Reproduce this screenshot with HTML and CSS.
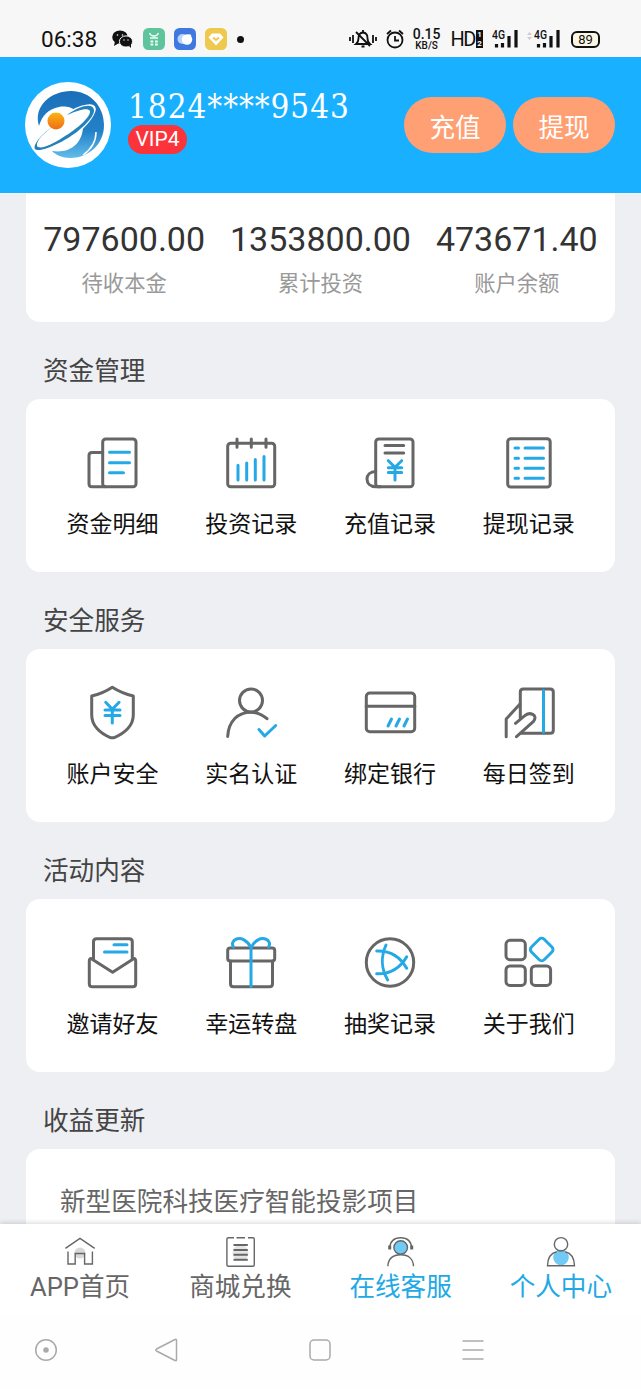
FILE: index.html
```
<!DOCTYPE html>
<html lang="zh-CN">
<head>
    <meta charset="UTF-8">
    <meta name="viewport" content="width=device-width, initial-scale=1.0">
    <title>个人中心</title>
    <link rel="stylesheet" href="styles.css">
</head>
<body>
    <div class="status-bar">
        <div class="status-left">
            <span class="time">06:38</span>
            <svg class="wechat" width="21" height="18" viewBox="0 0 21 18">
                <ellipse cx="8" cy="7" rx="7.8" ry="6.6" fill="#111"/>
                <path d="M3 11l-1 5 5-3z" fill="#111"/>
                <ellipse cx="14" cy="11.5" rx="6.6" ry="5.6" fill="#111" stroke="#f7f7f7"/>
                <path d="M17 16l2 2v-4z" fill="#111"/>
                <g fill="#f7f7f7"><circle cx="5.5" cy="5" r=".8"/><circle cx="10.5" cy="5" r=".8"/><circle cx="12" cy="10" r=".7"/><circle cx="16" cy="10" r=".7"/></g>
            </svg>
            <svg width="22" height="22" viewBox="0 0 22 22">
                <rect width="22" height="22" rx="5.5" fill="#5fc49c"/>
                <path d="M6.500 5q1 3 4.500 3t4.500-3M7 10h8M11 8v2" fill="none" stroke="#e9fff5" stroke-width="1.300"/>
                <path d="M7.500 12.500h2.800v2H7.500zM12 12.500h2.800v2H12zM7.500 15.500h2.800v2H7.500zM12 15.500h2.800v2H12z" fill="#e9fff5"/>
            </svg>
            <svg width="22" height="22" viewBox="0 0 22 22">
                <rect width="22" height="22" rx="5.500" fill="#3f79e0"/>
                <circle cx="8.500" cy="11" r="5" fill="#bdd3ff"/>
                <circle cx="13" cy="11.500" r="5.200" fill="#fff"/>
                <circle cx="15.500" cy="8" r="1.800" fill="#fff"/>
            </svg>
            <svg width="22" height="22" viewBox="0 0 22 22">
                <rect width="22" height="22" rx="5.500" fill="#eec94d"/>
                <path d="M7 5.500h8l3.500 4L11 17.500 3.500 9.500z" fill="#fff"/>
                <path d="M8 9.500l3 2.500 3-2.500" fill="none" stroke="#eec94d" stroke-width="2"/>
            </svg>
            <span class="dot"></span>
        </div>
        <div class="status-right">
            <svg width="28" height="22" viewBox="0 0 28 22" fill="none" stroke="#111" stroke-width="1.800">
                <path d="M1 9v4M4 7v8M24 7v8M27 9v4M7 16q2.500-2 2.500-6 0-5 4.500-5.500 4.500.5 4.500 5.500 0 4 2.500 6zM12.500 18.500h3M14 2v2M7 4l14 14"/>
            </svg>
            <svg class="alarm" width="18" height="20" viewBox="0 0 18 20" fill="none" stroke="#111" stroke-width="1.800">
                <circle cx="9" cy="11" r="7.500"/>
                <path d="M9 7v4.500h4M1 5l4-3.500M17 5l-4-3.500"/>
            </svg>
            <span class="speed"><b>0.15</b><small>KB/S</small></span>
            <span class="hd">HD</span>
            <span class="sim"><i>1</i><i>2</i></span>
            <svg class="signal" width="28" height="22" viewBox="0 0 28 22">
                <text x="0" y="11" textLength="13" lengthAdjust="spacingAndGlyphs">4G</text>
                <path d="M4.500 16v3.500M10.500 15v4.500M17 8v11.500M24 2v17.500" stroke="#111" stroke-width="3.200"/>
            </svg>
            <svg class="signal second" width="35" height="22" viewBox="0 0 35 22">
                <path d="M0 7l2.500-3L5 7zM0 9l2.500 3L5 9z" fill="#ccc"/>
                <text x="7" y="11" textLength="13" lengthAdjust="spacingAndGlyphs">4G</text>
                <path d="M11.500 16v3.500M17.500 15v4.500M24 8v11.500M31 2v17.500" stroke="#111" stroke-width="3.200"/>
            </svg>
            <span class="battery">89</span>
        </div>
    </div>

    <header class="header">
        <svg class="avatar" width="86" height="86" viewBox="0 0 86 86">
            <defs>
                <linearGradient id="planet" x1="0" y1="0" x2="0" y2="1">
                    <stop offset="0" stop-color="#1b6fb8"/>
                    <stop offset=".6" stop-color="#2381c8"/>
                    <stop offset="1" stop-color="#62bdea"/>
                </linearGradient>
                <linearGradient id="sun" x1="0" y1="0" x2="0" y2="1">
                    <stop offset="0" stop-color="#fbb512"/>
                    <stop offset="1" stop-color="#ee6d17"/>
                </linearGradient>
            </defs>
            <circle cx="43" cy="43" r="43" fill="#fff"/>
            <path d="M14 44C8 24 26 9 46 9c19 0 33 15 33 34 0 20-16 33-34 33-8 0-14-3-18-7 18 3 31-8 31-25C57 28 44 23 34 25c-11 2-17 9-20 19z" fill="url(#planet)"/>
            <ellipse cx="40" cy="46" rx="37" ry="12" transform="rotate(-36 40 46)" fill="#fff"/>
            <circle cx="37" cy="46" r="20" fill="#fff"/>
            <path d="M42 33C56 23 68 21 69 28c1 8-18 25-35 33-16 8-27 10-24 2 3-7 11-14 20-20C20 50 11 58 12 64c3 4 14-1 25-8 17-10 29-22 28-27-2-4-12-1-23 4z" fill="#2482ba"/>
            <path d="M71 50q0 14-13 23" fill="none" stroke="#fff" stroke-width="1.500"/>
            <circle cx="31" cy="39" r="8.500" fill="url(#sun)"/>
        </svg>
        <div class="user">
            <div class="phone">1824****9543</div>
            <span class="vip">VIP4</span>
        </div>
        <div class="actions">
            <button type="button">充值</button>
            <button type="button">提现</button>
        </div>
    </header>

    <main class="content">
        <div class="card stats">
            <div class="stat"><strong>797600.00</strong><span>待收本金</span></div>
            <div class="stat"><strong>1353800.00</strong><span>累计投资</span></div>
            <div class="stat"><strong>473671.40</strong><span>账户余额</span></div>
        </div>

        <h2>资金管理</h2>
        <div class="card menu">
            <a class="menu-item">
                <svg class="icon" viewBox="0 0 56 56">
                    <rect x="18.700" y="4" width="33.300" height="47.700" rx="3"/>
                    <path d="M18.700 17.500H8q-3 0-3 3v28.200q0 3 3 3h13"/>
                    <path class="blue" d="M25.500 17.300h20M25.500 27.700h20M25.500 37.800h14"/>
                </svg>
                <span>资金明细</span>
            </a>
            <a class="menu-item">
                <svg class="icon" viewBox="0 0 56 56">
                    <rect x="4.700" y="8.300" width="47" height="43.400" rx="3"/>
                    <path d="M14 4v8.300M28.300 4v8.300M43 4v8.300"/>
                    <path class="blue" d="M15 30.300V45M23.700 28V45M32.300 24.500V45M41 21.500V45"/>
                </svg>
                <span>投资记录</span>
            </a>
            <a class="menu-item">
                <svg class="icon" viewBox="0 0 56 56">
                    <rect x="13.700" y="4" width="37.300" height="47.700" rx="3"/>
                    <path d="M13.700 36.500C8 36.500 5 40 5 44s3 7.700 9 7.700h4M23 10.500h18.700M23 18h18.700"/>
                    <path class="blue" d="M26.300 25.700l6.700 6.600 6.700-6.600M33 32.300V45M26.300 32.700h13.400M26.300 37.500h13.400"/>
                </svg>
                <span>充值记录</span>
            </a>
            <a class="menu-item">
                <svg class="icon" viewBox="0 0 56 56">
                    <rect x="6.700" y="3.700" width="42.500" height="48.300" rx="3"/>
                    <path class="blue" d="M14 13h3.500M24 13h18.500M14 23.300h3.500M24 23.300h18.500M14 33.300h3.500M24 33.300h18.500M14 43.300h3.500M24 43.300h18.500"/>
                </svg>
                <span>提现记录</span>
            </a>
        </div>

        <h2>安全服务</h2>
        <div class="card menu">
            <a class="menu-item">
                <svg class="icon" viewBox="0 0 56 56">
                    <path d="M28.300 2.300Q38 8.500 49.300 11v19c0 11-9 18.500-18.500 22.300q-2.500 1-5 0C16.500 48.500 7.700 41 7.700 30V11Q19 8.500 28.300 2.300z"/>
                    <path class="blue" d="M21.700 17.300l6.600 7 6.800-7M28.300 24.300V38M21 25h15M21 30.500h15"/>
                </svg>
                <span>账户安全</span>
            </a>
            <a class="menu-item">
                <svg class="icon" viewBox="0 0 56 56">
                    <circle cx="28" cy="15.500" r="11.500"/>
                    <path d="M4.700 51.500C5.500 36 15 27.200 28 27.200q9 0 16 6.500"/>
                    <path class="blue" d="M36 44.500l5.700 6.500 11-10.500"/>
                </svg>
                <span>实名认证</span>
            </a>
            <a class="menu-item">
                <svg class="icon" viewBox="0 0 56 56">
                    <rect x="4.300" y="8" width="48.400" height="38.700" rx="3.500"/>
                    <path d="M4.300 21.300h48.400"/>
                    <path class="blue" d="M26 41l3.500-7M34 41l3.500-7M42 41l3.500-7"/>
                </svg>
                <span>绑定银行</span>
            </a>
            <a class="menu-item">
                <svg class="icon" viewBox="0 0 56 56">
                    <path d="M19.300 33V7q0-3 3-3h27q3 0 3 3v38.300q0 3-3 3H20"/>
                    <path class="blue" d="M42.500 5.500v41.500"/>
                    <path d="M5.200 51.700V34L19 19M14.500 38.300l9-7.500c5-4.500 14-1 9 5.500L15.500 51.700"/>
                </svg>
                <span>每日签到</span>
            </a>
        </div>

        <h2>活动内容</h2>
        <div class="card menu">
            <a class="menu-item">
                <svg class="icon" viewBox="0 0 56 56">
                    <path d="M9.500 24V6.700q0-3 3-3h32.800q3 0 3 3V24"/>
                    <path d="M7 23.500l21.600 13.800L50 23.500q1.700 0 1.700 3v22.200q0 3-3 3H8.300q-3 0-3-3V26.500q0-3 1.700-3z"/>
                    <path class="blue" d="M30 9.700h13M20.500 17h22.500"/>
                </svg>
                <span>邀请好友</span>
            </a>
            <a class="menu-item">
                <svg class="icon" viewBox="0 0 56 56">
                    <rect x="4.700" y="13" width="47" height="13" rx="2.500"/>
                    <path d="M7.500 26v22.700q0 3 3 3h36q3 0 3-3V26"/>
                    <path class="blue" d="M28 51.500V12.500C24 5 18 2.500 13.500 4 9.500 5.500 8.500 9 10.500 12M28 12.500C32 5 38 2.500 42.500 4c4 1.500 5 5 3 8"/>
                </svg>
                <span>幸运转盘</span>
            </a>
            <a class="menu-item">
                <svg class="icon" viewBox="0 0 56 56">
                    <circle cx="28" cy="27.500" r="23.700"/>
                    <path class="blue" d="M14.700 16c12-.5 23 5 30 17.300M14.700 38.700c12 .5 23-5 30-17M24 10c-5 11-5 24 1.700 35"/>
                </svg>
                <span>抽奖记录</span>
            </a>
            <a class="menu-item">
                <svg class="icon" viewBox="0 0 56 56">
                    <rect x="5" y="5.300" width="19.300" height="19.400" rx="4"/>
                    <rect x="5" y="31" width="19.300" height="19.400" rx="4"/>
                    <rect x="30.300" y="31" width="19.300" height="19.400" rx="4"/>
                    <rect class="blue" x="31.700" y="5.500" width="18" height="18" rx="3.500" transform="rotate(45 40.700 14.500)"/>
                </svg>
                <span>关于我们</span>
            </a>
        </div>

        <h2>收益更新</h2>
        <div class="card news">新型医院科技医疗智能投影项目</div>
    </main>

    <nav class="tab-bar">
        <a class="tab">
            <svg viewBox="0 0 32 32">
                <circle cx="16" cy="17" r="5.500" fill="#d8d8d8" stroke="none"/>
                <path d="M1.400 12.300L16 2.300l14.700 10M4 15.500V28h7.200V17.500h9.400V28h7.800V15.500"/>
            </svg>
            <span>APP首页</span>
        </a>
        <a class="tab">
            <svg viewBox="0 0 32 32">
                <circle cx="16.500" cy="17" r="8" fill="#e4e4e4" stroke="none"/>
                <path d="M10 1.800H4.400q-1.500 0-1.500 1.500v25.500q0 1.500 1.500 1.500h24.400q1.500 0 1.500-1.500V3.300q0-1.500-1.500-1.500H24M12.500 1.800h8.500"/>
                <path d="M9.500 9h14.300M9.500 14h14.300M9.500 18.800h14.300M9.500 23.700h14.300" stroke-width="2"/>
            </svg>
            <span>商城兑换</span>
        </a>
        <a class="tab active">
            <svg viewBox="0 0 32 32">
                <circle cx="15.700" cy="11.500" r="6.800" fill="#71c9f5"/>
                <path d="M4.700 12C5.200 5.500 9.200 1.800 15.700 1.800S26.200 5.500 26.700 12M2.800 30.300c.5-7 5-11.500 13-11.500s12.400 4.500 12.700 11.500"/>
                <path d="M4.700 9.500v4M26.700 9.500v4" stroke-width="3"/>
            </svg>
            <span>在线客服</span>
        </a>
        <a class="tab active">
            <svg viewBox="0 0 32 32">
                <circle cx="16" cy="21.500" r="7.800" fill="#71c9f5" stroke="none"/>
                <circle cx="16" cy="8.300" r="6.700"/>
                <path d="M11.700 15.700C5.700 17 2.700 22 2.500 29.700h27C29.200 22 26.200 17 20.200 15.700"/>
            </svg>
            <span>个人中心</span>
        </a>
    </nav>

    <div class="system-nav">
        <svg viewBox="0 0 24 24"><circle cx="12" cy="12" r="10.300"/><circle cx="12" cy="12" r="2" fill="#aaa"/></svg>
        <svg viewBox="0 0 24 24"><path d="M21 1.500Q22.500.5 22.500 2.500v19q0 2-1.500 1L2.500 13Q1 12 2.500 11z"/></svg>
        <svg viewBox="0 0 24 24"><rect x="2" y="2" width="20" height="20" rx="4"/></svg>
        <svg viewBox="0 0 24 24"><path d="M1.500 3h21M1.500 12h21M1.500 21h21"/></svg>
    </div>
</body>
</html>
```
FILE: styles.css
```
* {
    box-sizing: border-box;
}
body {
    margin: 0;
    height: 1389px;
    display: flex;
    flex-direction: column;
    overflow: hidden;
    background: #eeeff3;
    font-family: Roboto, "Noto Sans CJK SC", sans-serif;
    color: #333;
}
svg {
    display: block;
    flex-shrink: 0;
}

/* phone status bar */
.status-bar {
    height: 57px;
    padding: 21px 41px 0;
    display: flex;
    justify-content: space-between;
    background: #f7f7f7;
    color: #111;
}
.status-left,
.status-right {
    display: flex;
    align-items: center;
    height: 36px;
}
.status-left {
    gap: 9px;
}
.time {
    width: 62px;
    font-size: 22.5px;
}
.wechat {
    margin-right: 1px;
}
.dot {
    width: 7px;
    height: 7px;
    margin-left: 1px;
    border-radius: 50%;
    background: #111;
}
.alarm {
    margin-left: 9px;
}
.speed {
    width: 28px;
    margin-left: 9px;
    display: flex;
    flex-direction: column;
    align-items: center;
}
.speed b {
    font-size: 14px;
    font-weight: 500;
    line-height: 14px;
}
.speed small {
    font-size: 10px;
    font-weight: 500;
    line-height: 10px;
}
.hd {
    margin-left: 10px;
    font-size: 20px;
    letter-spacing: -1.5px;
}
.sim i {
    display: block;
    width: 7px;
    margin-left: 1px;
    background: #111;
    color: #fff;
    font: bold 8px/9px Roboto, sans-serif;
    text-align: center;
}
.signal {
    margin-left: 9px;
}
.signal.second {
    margin-left: 7px;
}
.signal text {
    font-size: 12.5px;
    font-weight: 500;
    fill: #111;
}
.battery {
    width: 29px;
    height: 17px;
    margin-left: 9px;
    border: 2px solid #111;
    border-radius: 6px;
    background: #fbf5e4;
    font-size: 13px;
    line-height: 13px;
    text-align: center;
}

.header {
    height: 136px;
    flex-shrink: 0;
    padding: 0 26px 0 25px;
    display: flex;
    align-items: center;
    background: #18b0ff;
    color: #fff;
}
.user {
    margin: 0 0 7px 17px;
    flex: 1;
}
.phone {
    font-family: "DejaVu Serif Condensed", "DejaVu Serif", serif;
    font-stretch: condensed;
    font-size: 33px;
    line-height: 36px;
    letter-spacing: 0.95px;
}
.vip {
    display: block;
    width: 59px;
    height: 29px;
    border-radius: 15px;
    background: #fb343b;
    font-size: 21px;
    line-height: 29px;
    text-align: center;
}
.actions {
    display: flex;
    gap: 7px;
}
.actions button {
    width: 102px;
    height: 56px;
    padding: 0;
    border: none;
    border-radius: 28px;
    background: #ff9f74;
    color: #fff;
    font-family: "Noto Sans CJK SC", sans-serif;
    font-size: 25.6px;
}

.content {
    flex: 1;
    min-height: 0;
    padding: 0 26px;
    overflow: hidden;
}
.card {
    background: #fff;
    border-radius: 14px;
}
h2 {
    height: 77px;
    margin: 0;
    padding: 21px 17px 0;
    color: #444;
    font-size: 25.6px;
    font-weight: 400;
    line-height: 57px;
}
.stats {
    height: 129px;
    padding-top: 22px;
    display: grid;
    grid-template-columns: repeat(3, 1fr);
    border-radius: 0 0 14px 14px;
}
.stat {
    text-align: center;
}
.stat strong {
    display: block;
    font-size: 34px;
    font-weight: 400;
    line-height: 48px;
}
.stat span {
    display: block;
    color: #999;
    font-size: 21.3px;
    line-height: 42px;
}
.menu {
    height: 173px;
    padding: 36px 17px 0;
    display: grid;
    grid-template-columns: repeat(4, 1fr);
}
.menu-item {
    display: flex;
    flex-direction: column;
    align-items: center;
    gap: 18px;
    color: #111;
    font-size: 23px;
    line-height: 32px;
}
.icon {
    width: 56px;
    height: 56px;
    fill: none;
    stroke: #666;
    stroke-width: 3;
    stroke-linecap: round;
    stroke-linejoin: round;
}
.icon .blue {
    stroke: #24a9e6;
}
.news {
    height: 120px;
    padding: 34px 34px 0;
    color: #666;
    font-size: 25.6px;
    line-height: 38px;
}

.tab-bar {
    height: 91px;
    flex-shrink: 0;
    padding-top: 12px;
    display: grid;
    grid-template-columns: repeat(4, 1fr);
    background: #fff;
    box-shadow: 0 -1px 5px rgba(0, 0, 0, 0.16);
    position: relative;
}
.tab {
    display: flex;
    flex-direction: column;
    align-items: center;
    color: #666;
    font-size: 25.6px;
    line-height: 38px;
}
.tab svg {
    width: 32px;
    height: 32px;
    fill: none;
    stroke: #666;
    stroke-width: 1.4;
}
.tab.active {
    color: #21a9e5;
}

/* android buttons */
.system-nav {
    height: 74px;
    flex-shrink: 0;
    padding: 23px 0 0 34px;
    display: grid;
    grid-template-columns: 120px 154px 153px 24px;
    background: #fefefe;
    position: relative;
}
.system-nav svg {
    width: 24px;
    height: 24px;
    fill: none;
    stroke: #aaa;
    stroke-width: 1.5;
}
```
